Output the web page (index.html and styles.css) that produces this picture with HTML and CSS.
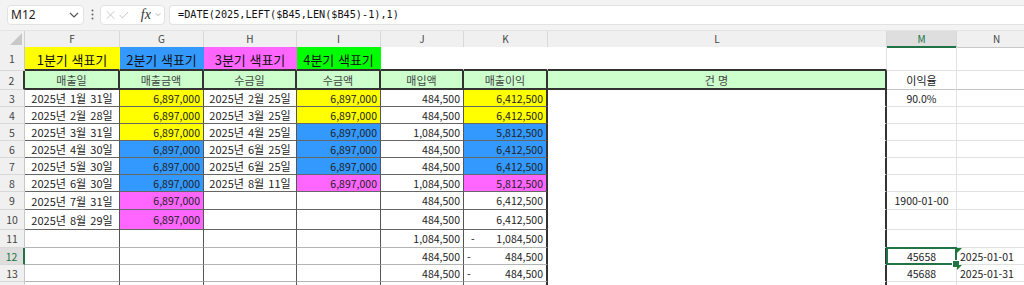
FILE: index.html
```html
<!DOCTYPE html>
<html lang="ko">
<head>
  <meta charset="UTF-8">
  <title>매출 색표기</title>
  <link rel="stylesheet" href="styles.css">
</head>
<body>
  <div class="fbar">
    <div class="namebox">
      <span>M12</span>
      <svg width="10" height="6" viewBox="0 0 10 6"><path d="M1 1 L5 5 L9 1" fill="none" stroke="#555" stroke-width="1.2"/></svg>
    </div>
    <div class="vdots">
      <svg width="3" height="11" viewBox="0 0 3 11"><circle cx="1.5" cy="1.5" r="1" fill="#666"/><circle cx="1.5" cy="5.5" r="1" fill="#666"/><circle cx="1.5" cy="9.5" r="1" fill="#666"/></svg>
    </div>
    <div class="fnbox">
      <svg width="12" height="12" viewBox="0 0 12 12"><path d="M1 1 L11 11 M11 1 L1 11" stroke="#bbb" stroke-width="1.1"/></svg>
      <svg width="13" height="10" viewBox="0 0 13 10"><path d="M1 5 L4.5 9 L12 1" fill="none" stroke="#bbb" stroke-width="1.1"/></svg>
      <span class="fx">fx</span>
      <svg width="8" height="5" viewBox="0 0 8 5"><path d="M1 1 L4 4 L7 1" fill="none" stroke="#999" stroke-width="1"/></svg>
    </div>
    <div class="formula">=DATE(2025,LEFT($B45,LEN($B45)-1),1)</div>
  </div>

  <div class="sheet">
    <div class="row hdr">
      <div class="corner"><svg width="12" height="12" viewBox="0 0 12 12"><polygon points="12,0 12,12 0,12" fill="#c8c8c8"/></svg></div>
      <div class="col">F</div><div class="col">G</div><div class="col">H</div><div class="col">I</div>
      <div class="col">J</div><div class="col">K</div><div class="col">L</div>
      <div class="col sel">M</div><div class="col">N</div>
    </div>

    <div class="row r1">
      <div class="rh">1</div>
      <div class="c ctr q y">1분기 색표기</div>
      <div class="c ctr q b">2분기 색표기</div>
      <div class="c ctr q m">3분기 색표기</div>
      <div class="c ctr q g">4분기 색표기</div>
      <div class="c q w"></div><div class="c q w"></div><div class="c q wl"></div>
      <div class="c"></div><div class="c"></div>
    </div>

    <div class="row r2">
      <div class="rh dark">2</div>
      <div class="c ctr th">매출일</div>
      <div class="c ctr th">매출금액</div>
      <div class="c ctr th">수금일</div>
      <div class="c ctr th">수금액</div>
      <div class="c ctr th">매입액</div>
      <div class="c ctr th">매출이익</div>
      <div class="c ctr th">건 명</div>
      <div class="c ctr ln">이익율</div><div class="c ln"></div>
    </div>

    <div class="row r17">
      <div class="rh">3</div>
      <div class="c ctr dt bd">2025년 1월 31일</div>
      <div class="c num bd y">6,897,000</div>
      <div class="c ctr dt bd">2025년 2월 25일</div>
      <div class="c num bd y">6,897,000</div>
      <div class="c num bd">484,500</div>
      <div class="c num bk y">6,412,500</div>
      <div class="c lc"></div>
      <div class="c ctr">90.0%</div><div class="c"></div>
    </div>

    <div class="row r17">
      <div class="rh">4</div>
      <div class="c ctr dt bd">2025년 2월 28일</div>
      <div class="c num bd y">6,897,000</div>
      <div class="c ctr dt bd">2025년 3월 25일</div>
      <div class="c num bd y">6,897,000</div>
      <div class="c num bd">484,500</div>
      <div class="c num bk y">6,412,500</div>
      <div class="c lc"></div>
      <div class="c"></div><div class="c"></div>
    </div>

    <div class="row r17">
      <div class="rh">5</div>
      <div class="c ctr dt bd">2025년 3월 31일</div>
      <div class="c num bd y">6,897,000</div>
      <div class="c ctr dt bd">2025년 4월 25일</div>
      <div class="c num bd b">6,897,000</div>
      <div class="c num bd">1,084,500</div>
      <div class="c num bk b">5,812,500</div>
      <div class="c lc"></div>
      <div class="c"></div><div class="c"></div>
    </div>

    <div class="row r17">
      <div class="rh">6</div>
      <div class="c ctr dt bd">2025년 4월 30일</div>
      <div class="c num bd b">6,897,000</div>
      <div class="c ctr dt bd">2025년 6월 25일</div>
      <div class="c num bd b">6,897,000</div>
      <div class="c num bd">484,500</div>
      <div class="c num bk b">6,412,500</div>
      <div class="c lc"></div>
      <div class="c"></div><div class="c"></div>
    </div>

    <div class="row r17">
      <div class="rh">7</div>
      <div class="c ctr dt bd">2025년 5월 30일</div>
      <div class="c num bd b">6,897,000</div>
      <div class="c ctr dt bd">2025년 6월 25일</div>
      <div class="c num bd b">6,897,000</div>
      <div class="c num bd">484,500</div>
      <div class="c num bk b">6,412,500</div>
      <div class="c lc"></div>
      <div class="c"></div><div class="c"></div>
    </div>

    <div class="row r17">
      <div class="rh">8</div>
      <div class="c ctr dt bd">2025년 6월 30일</div>
      <div class="c num bd b">6,897,000</div>
      <div class="c ctr dt bd">2025년 8월 11일</div>
      <div class="c num bd m">6,897,000</div>
      <div class="c num bd">1,084,500</div>
      <div class="c num bk m">5,812,500</div>
      <div class="c lc"></div>
      <div class="c"></div><div class="c"></div>
    </div>

    <div class="row r18">
      <div class="rh">9</div>
      <div class="c ctr dt bd">2025년 7월 31일</div>
      <div class="c num bd m">6,897,000</div>
      <div class="c bd"></div>
      <div class="c bd"></div>
      <div class="c num bd">484,500</div>
      <div class="c num bk">6,412,500</div>
      <div class="c lc"></div>
      <div class="c ctr">1900-01-00</div><div class="c"></div>
    </div>

    <div class="row r20">
      <div class="rh">10</div>
      <div class="c ctr dt bd">2025년 8월 29일</div>
      <div class="c num bd m">6,897,000</div>
      <div class="c bd"></div>
      <div class="c bd"></div>
      <div class="c num bd">484,500</div>
      <div class="c num bk">6,412,500</div>
      <div class="c lc"></div>
      <div class="c"></div><div class="c"></div>
    </div>

    <div class="row r18">
      <div class="rh">11</div>
      <div class="c bl"></div><div class="c bl"></div><div class="c bl"></div><div class="c bl"></div>
      <div class="c num bl">1,084,500</div>
      <div class="c acc bkl"><span class="minus wide">-</span><span>1,084,500</span></div>
      <div class="c lc"></div>
      <div class="c"></div><div class="c"></div>
    </div>

    <div class="row r17">
      <div class="rh on">12</div>
      <div class="c bl"></div><div class="c bl"></div><div class="c bl"></div><div class="c bl"></div>
      <div class="c num bl">484,500</div>
      <div class="c acc bkl"><span class="minus">-</span><span>484,500</span></div>
      <div class="c lc"></div>
      <div class="c ctr active">45658</div><div class="c flag">2025-01-01</div>
    </div>

    <div class="row r17">
      <div class="rh">13</div>
      <div class="c bl"></div><div class="c bl"></div><div class="c bl"></div><div class="c bl"></div>
      <div class="c num bl">484,500</div>
      <div class="c acc bkl"><span class="minus">-</span><span>484,500</span></div>
      <div class="c lc"></div>
      <div class="c ctr">45688</div><div class="c flag">2025-01-31</div>
    </div>

    <div class="row r17">
      <div class="rh"></div>
      <div class="c bl"></div><div class="c bl"></div><div class="c bl"></div><div class="c bl"></div>
      <div class="c bl"></div><div class="c bkl"></div>
      <div class="c lc"></div>
      <div class="c"></div><div class="c"></div>
    </div>
  </div>
</body>
</html>
```

FILE: styles.css
```css
* {
  margin: 0;
  padding: 0;
  box-sizing: border-box;
}
body {
  font-family: "Noto Sans CJK KR", "Noto Sans", sans-serif;
  background: #fff;
  color: #222;
  overflow: hidden;
  width: 1024px;
  height: 285px;
}

/* formula bar */
.fbar {
  height: 31px;
  background: #f3f3f3;
  display: flex;
  align-items: center;
  padding: 0 0 1px 7px;
  border-bottom: 1px solid #e4e4e4;
}
.namebox {
  width: 77px;
  height: 20px;
  background: #fff;
  border: 1px solid #e2e2e2;
  border-radius: 4px;
  display: flex;
  align-items: center;
  justify-content: space-between;
  padding: 0 4px 0 3px;
  font-family: "Noto Sans", sans-serif;
  font-size: 12px;
  color: #222;
}
.vdots {
  width: 16px;
  display: flex;
  justify-content: center;
}
.fnbox {
  width: 65px;
  height: 20px;
  background: #fff;
  border: 1px solid #e2e2e2;
  border-radius: 4px;
  display: flex;
  align-items: center;
  gap: 4px;
  padding: 0 3px 0 5px;
}
.fx {
  font-family: "Liberation Serif", serif;
  font-style: italic;
  font-size: 14px;
  color: #333;
  margin-left: 8px;
}
.formula {
  flex: 1;
  height: 20px;
  margin-left: 4px;
  background: #fff;
  border: 1px solid #e2e2e2;
  border-right: none;
  border-radius: 4px 0 0 4px;
  font-family: "DejaVu Sans Mono", monospace;
  font-size: 10.2px;
  color: #111;
  line-height: 18px;
  padding-left: 8px;
}

/* sheet grid */
.row {
  display: grid;
  grid-template-columns: 25px 95px 84px 93px 84px 83px 84px 339px 70px 80px;
}
.hdr { height: 16px; }
.r1 { height: 24px; }
.r2 { height: 19px; }
.r17 { height: 17px; }
.r18 { height: 18px; }
.r20 { height: 20px; }

.corner {
  background: #f0f0f0;
  border-right: 1px solid #d0d0d0;
  border-bottom: 1px solid #c8c8c8;
  display: flex;
  justify-content: flex-end;
  align-items: flex-end;
  padding: 0 2px 2px 0;
}
.col {
  background: #f0f0f0;
  border-right: 1px solid #d8d8d8;
  border-bottom: 1px solid #c8c8c8;
  font-size: 10px;
  color: #444;
  text-align: center;
  line-height: 15px;
}
.col.sel {
  background: #dedede;
  color: #217346;
  border-bottom: 2px solid #217346;
}
.rh {
  background: #f0f0f0;
  border-right: 1px solid #c8c8c8;
  border-bottom: 1px solid #d8d8d8;
  font-size: 10.5px;
  color: #444;
  display: flex;
  align-items: center;
  justify-content: center;
}
.rh.dark { border-right: 2px solid #333; }
.rh.on {
  background: #dedede;
  color: #217346;
  border-right: 2px solid #217346;
}

.c {
  border-right: 1px solid #e2e2e2;
  border-bottom: 1px solid #e2e2e2;
  display: flex;
  align-items: center;
  padding: 0 3px;
  font-size: 10.5px;
  white-space: nowrap;
  overflow: visible;
  position: relative;
}
.ctr { justify-content: center; }
.num { justify-content: flex-end; }
.dt { font-size: 11px; word-spacing: 1px; }
.acc { justify-content: space-between; padding-left: 3px; }
.minus.wide { padding-left: 4px; }

/* fills */
.y { background: #ffff00; }
.b { background: #3399ff; }
.m { background: #ff66ff; }
.g { background: #00ff00; }
.w, .wl { background: #fff; }

/* row 1 labels */
.q {
  font-size: 13px;
  color: #111;
  padding-top: 2px;
  border-right-color: transparent;
  border-bottom: 2px solid #333;
}
.wl { border-right-color: #e2e2e2; }

/* row 2 headers */
.th {
  background: #ccffcc;
  color: #444;
  font-size: 11px;
  border-right: 2px solid #333;
  border-bottom: 2px solid #333;
}
.ln { border-bottom-color: #c4c4c4; font-size: 11px; }

/* bordered data */
.bd {
  border-right-color: #555;
  border-bottom-color: #666;
}
.bk {
  border-right: 2px solid #333;
  border-bottom-color: #666;
}
.bl {
  border-right-color: #555;
  border-bottom-color: #b4b4b4;
}
.bkl {
  border-right: 2px solid #333;
  border-bottom-color: #b4b4b4;
}
.lc {
  background: #fff;
  border-right: 2px solid #333;
  border-bottom-color: #fff;
}

/* selection */
.active::after {
  content: "";
  position: absolute;
  left: -1px;
  top: -1px;
  right: -1px;
  bottom: -1px;
  border: 2px solid #217346;
}
.active::before {
  content: "";
  position: absolute;
  right: -4px;
  bottom: -4px;
  width: 6px;
  height: 6px;
  background: #217346;
  border: 1px solid #fff;
  z-index: 2;
}
.flag::before {
  content: "";
  position: absolute;
  left: 0;
  top: 0;
  border-top: 5px solid #1e7b34;
  border-right: 5px solid transparent;
  z-index: 3;
}
```
